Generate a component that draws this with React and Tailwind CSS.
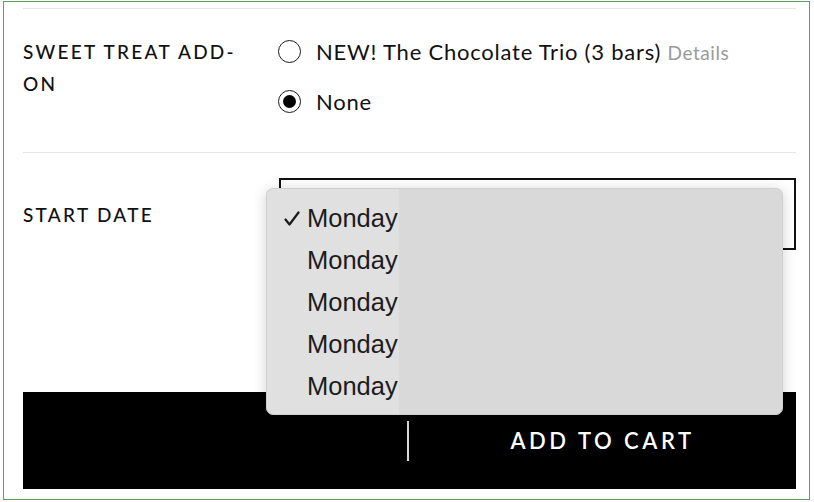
import { useState } from "react";

const days = ["Monday", "Monday", "Monday", "Monday", "Monday"];

function Radio({ checked }) {
  return (
    <span className="flex h-[23px] w-[23px] shrink-0 items-center justify-center rounded-full border-[1.5px] border-[#1a1a1a] bg-white">
      {checked && <span className="h-[13px] w-[13px] rounded-full bg-black" />}
    </span>
  );
}

function CheckIcon() {
  return (
    <svg width="16" height="16" viewBox="0 0 16 16" fill="none">
      <path
        d="M1.5 8.5 L5.5 13.5 L14.5 1.5"
        stroke="#1c1c1c"
        strokeWidth="2.2"
        strokeLinecap="round"
        strokeLinejoin="round"
      />
    </svg>
  );
}

export default function App() {
  const [treat, setTreat] = useState("none");

  return (
    <div className="h-[502px] w-[814px] bg-white pl-[3px] pt-[1px] font-['Lato',sans-serif] text-[#111]">
      <div className="h-[499px] w-[807px] border border-[#5e9e63] pl-[19px] pr-[13px] pt-[6px]">
        <div className="border-t border-[#e4e4e4]" />

        {/* sweet treat */}
        <div className="flex h-[144px] border-b border-[#e4e4e4]">
          <div className="w-[255px] pt-[27px] text-[19px] font-medium uppercase leading-[32px] tracking-[0.12em]">
            Sweet Treat Add-
            <br />
            On
          </div>
          <div className="flex flex-col gap-[27px] pt-[31px]">
            <label
              className="flex cursor-pointer items-center gap-[15px]"
              onClick={() => setTreat("trio")}
            >
              <Radio checked={treat === "trio"} />
              <span className="text-[22px] leading-none tracking-[0.035em]">
                NEW! The Chocolate Trio (3 bars){" "}
                <span className="text-[19px] tracking-[0.03em] text-[#9a9a9a]">Details</span>
              </span>
            </label>
            <label
              className="flex cursor-pointer items-center gap-[15px]"
              onClick={() => setTreat("none")}
            >
              <Radio checked={treat === "none"} />
              <span className="text-[22px] leading-none tracking-[0.035em]">None</span>
            </label>
          </div>
        </div>

        {/* start date */}
        <div className="flex h-[239px] pt-[25px]">
          <div className="w-[256px] pt-[27px] text-[19px] font-medium uppercase leading-none tracking-[0.12em]">
            Start Date
          </div>
          <div className="relative flex-1">
            <div className="h-[72px] w-full border-2 border-[#111] bg-white" />
            <div className="absolute left-[-13px] top-[10px] flex h-[227px] w-[517px] overflow-hidden rounded-[7px] border border-[#cfcfcf] bg-[#d9d9d9] font-['Liberation_Sans',Arial,sans-serif] shadow-[0_2px_14px_rgba(0,0,0,0.18)]">
              <div className="flex w-[132px] flex-col bg-[#e0e0e0] pt-[9px]">
                {days.map((d, i) => (
                  <div key={i} className="flex h-[42px] items-center">
                    <span className="flex w-[40px] justify-end pr-[7px]">
                      {i === 0 && <CheckIcon />}
                    </span>
                    <span className="text-[25.5px] leading-none text-[#1c1c1c]">{d}</span>
                  </div>
                ))}
              </div>
              <div className="flex-1" />
            </div>
          </div>
        </div>

        {/* add to cart */}
        <div className="flex h-[97px] items-center bg-black">
          <div className="flex h-full w-[386px] items-center justify-end">
            <span className="h-[40px] w-[2px] bg-[#d8d8d8]" />
          </div>
          <button className="flex-1 text-center text-[22px] font-semibold uppercase tracking-[0.16em] text-white">
            Add to Cart
          </button>
        </div>
      </div>
    </div>
  );
}
